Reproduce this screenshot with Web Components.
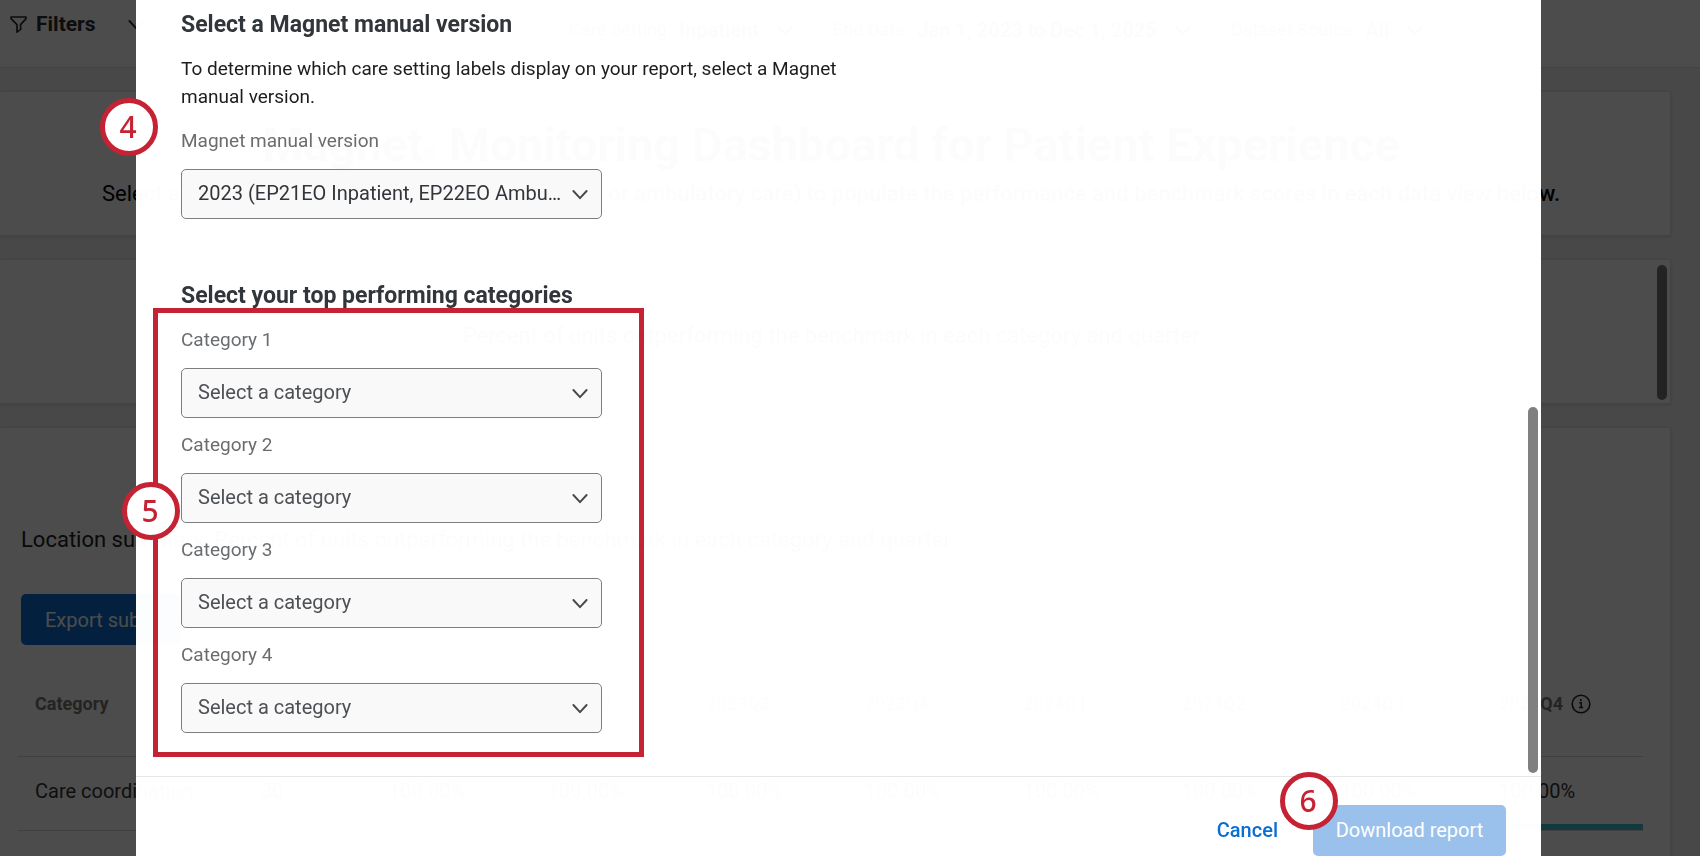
<!DOCTYPE html>
<html lang="en">
<head>
<meta charset="utf-8">
<title>Magnet Monitoring Dashboard</title>
<style>
  html, body { margin: 0; height: 100%; overflow: hidden; }
  body { background: #f1f1f1; font-family: Roboto, "Noto Sans", sans-serif; font-size: 19px; color: #000; }
</style>
</head>
<body>
<magnet-page></magnet-page>
<script>
const define = (name, html, init) => {
  const template = document.createElement('template');
  template.innerHTML = html;
  customElements.define(name, class extends HTMLElement {
    connectedCallback() {
      if (this.shadowRoot) return;
      const root = this.attachShadow({ mode: 'open' });
      root.append(template.content.cloneNode(true));
      if (init) init(this, root);
    }
  });
};

define('chevron-icon', `
  <style>
    :host { display: block; width: 16px; height: 16px; flex: none; }
    svg { display: block; width: 100%; height: 100%; }
  </style>
  <svg viewBox="0 0 16 16" fill="none" stroke="currentColor" stroke-width="1.9" stroke-linecap="round" stroke-linejoin="round"><path d="M1.4 5 8 12.2 14.6 5"/></svg>`);

define('filter-chip', `
  <style>
    :host { display: flex; align-items: center; gap: 8px; font-size: 18px; white-space: nowrap; }
    b { font-size: 20px; }
    chevron-icon { margin-left: 10px; }
  </style>
  <span id="name"></span><b><slot></slot></b><chevron-icon></chevron-icon>`,
  (host, root) => { root.getElementById('name').textContent = host.getAttribute('name'); });

define('filter-bar', `
  <style>
    :host { display: flex; box-sizing: border-box; height: 68px; background: #fff; border-bottom: 1px solid #dedede; }
    .filters { display: flex; align-items: center; height: 48px; width: 560px; padding-left: 9px; color: #2d2d2d; }
    .filters svg { width: 19px; height: 19px; margin-right: 8px; }
    .filters b { font-size: 21px; width: 92px; }
    .chips { display: flex; align-items: center; gap: 40px; height: 59px; }
  </style>
  <div class="filters">
    <svg viewBox="0 0 19 19" fill="none" stroke="currentColor" stroke-width="1.7" stroke-linejoin="round"><path d="M2 2h15v1.6l-5.4 6v4.8L8 17.2V9.6L2 3.6z"/></svg>
    <b>Filters</b><chevron-icon></chevron-icon>
  </div>
  <div class="chips">
    <filter-chip name="Care Setting:">Inpatient</filter-chip>
    <filter-chip name="End Date:">Jan 1, 2023 to Dec 1, 2025</filter-chip>
    <filter-chip name="Dataset Source:">All</filter-chip>
  </div>`);

define('dash-card', `
  <style>
    :host { display: block; box-sizing: border-box; position: relative; background: #fff; border: 1px solid #e2e2e2; border-left: 0; box-shadow: 0 1px 3px rgba(0,0,0,.12); min-height: 145px; }
  </style>
  <slot></slot>`);

define('summary-table', `
  <style>
    :host { display: block; }
    table { width: 100%; border-collapse: collapse; table-layout: fixed; }
    th, td { text-align: left; padding: 0; font-weight: 400; border-bottom: 1px solid #d8d8d8; white-space: nowrap; }
    th:first-child, td:first-child { padding-left: 17px; }
    thead th { box-sizing: border-box; height: 98px; padding-bottom: 6px; font-size: 18px; font-weight: 700; color: #777; vertical-align: middle; }
    tbody th, tbody td { height: 74px; box-sizing: border-box; font-size: 20px; color: #333; vertical-align: top; padding-top: 23px; line-height: 22px; position: relative; }
    .bar { position: absolute; left: 0; right: 0; bottom: 0; height: 6px; background: #3cbecb; }
    .last { display: flex; align-items: center; gap: 8px; }
    svg { width: 20px; height: 20px; color: #222; }
  </style>
  <table>
    <colgroup><col style="width:243px"><col style="width:128px"><col><col><col><col><col><col><col><col style="width:144px"></colgroup>
    <thead><tr></tr></thead><tbody></tbody>
  </table>`,
  (host, root) => {
    const quarters = ['2023Q1', '2023Q2', '2023Q3', '2023Q4', '2024Q1', '2024Q2', '2024Q3'];
    root.querySelector('thead tr').innerHTML = '<th scope="col">Category</th><th scope="col"></th>' +
      quarters.map(q => `<th scope="col">${q}</th>`).join('') +
      `<th scope="col"><span class="last">2024Q4<svg viewBox="0 0 20 20" fill="none" stroke="currentColor"><circle cx="10" cy="10" r="8.8" stroke-width="1.6"/><path d="M8.2 8.8h2v4.4M8 13.6h4.2" stroke-width="1.5"/><circle cx="9.8" cy="6" r="1.1" fill="currentColor" stroke="none"/></svg></span></th>`;
    root.querySelector('tbody').innerHTML = ['Care coordination', 'Careful listening'].map(name =>
      `<tr><th scope="row">${name}</th><td>30</td>${'<td>100.00%</td>'.repeat(7)}<td>100.00%<span class="bar"></span></td></tr>`).join('');
  });

define('dash-board', `
  <style>
    :host { display: block; }
    main { display: flex; flex-direction: column; gap: 23px; padding: 23px 29px 0 0; }
    h1 { margin: 0; padding: 26px 8px 0 0; text-align: center; font-size: 47px; line-height: 54px; white-space: nowrap; }
    sup { font-size: 18px; vertical-align: baseline; font-weight: 400; }
    .intro { display: flex; justify-content: space-between; margin: 0; padding: 0 110px 0 102px; line-height: 24px; font-size: 22px; white-space: nowrap; }
    .intro span + span { font-weight: 500; }
    .sub { margin: 0; padding: 63px 8px 0 0; text-align: center; line-height: 26px; font-size: 22px; }
    .thumb { position: absolute; right: 3px; top: 5px; bottom: 3px; width: 10px; border-radius: 5px; background: #777; }
    .lower { display: flex; flex-direction: column; align-items: flex-start; padding: 98px 27px 0 21px; }
    h2 { margin: 0; font-size: 22px; font-weight: 400; line-height: 28px; color: #222; }
    button { margin: 40px 0 13px; height: 51px; width: 160px; padding: 0 24px; border: 0; border-radius: 5px; background: #0a6ed1; color: #fff; font: 20px Roboto, sans-serif; text-align: left; white-space: nowrap; }
    summary-table { align-self: stretch; margin-left: -3px; }
  </style>
  <filter-bar></filter-bar>
  <main>
    <dash-card>
      <h1>Magnet<sup>®</sup> Monitoring Dashboard for Patient Experience</h1>
      <p class="intro"><span>Select a</span><span>or ambulatory care) to populate the performance and benchmark scores in each data view below.</span></p>
    </dash-card>
    <dash-card>
      <p class="sub">Percent of units outperforming the benchmark in each category and quarter</p>
      <div class="thumb"></div>
    </dash-card>
    <dash-card>
      <div class="lower">
        <h2>Location summary: Percent of units outperforming the benchmark in each category and quarter</h2>
        <button type="button">Export sub</button>
        <summary-table></summary-table>
      </div>
    </dash-card>
  </main>`);

define('select-field', `
  <style>
    :host { display: flex; flex-direction: column; gap: 14px; width: 421px; }
    label { font-size: 19px; line-height: 28px; color: #6a6d70; }
    .box { display: grid; align-items: center; height: 50px; }
    .box > * { grid-area: 1 / 1; }
    select { appearance: none; width: 100%; height: 100%; box-sizing: border-box; margin: 0; padding: 0 38px 2px 16px; border: 1px solid #7c7e80; border-radius: 5px; background: #f9f9f9; color: #4d5054; font: 20px Roboto, sans-serif; text-overflow: ellipsis; }
    select.filled { color: #32363a; }
    chevron-icon { justify-self: end; margin-right: 14px; color: #45484c; pointer-events: none; }
  </style>
  <label for="field"></label>
  <div class="box"><select id="field"><option></option></select><chevron-icon></chevron-icon></div>`,
  (host, root) => {
    root.querySelector('label').textContent = host.getAttribute('label');
    root.querySelector('option').textContent = host.getAttribute('value') || 'Select a category';
    root.querySelector('select').classList.toggle('filled', host.hasAttribute('value'));
  });

define('step-badge', `
  <style>
    :host { position: absolute; box-sizing: border-box; width: 58px; height: 58px; border: 5px solid #c52233; border-radius: 50%; background: #fff; color: #c52233; display: flex; align-items: center; justify-content: center; padding: 0 2px 2px 0; font: 500 30px "Noto Sans", sans-serif; z-index: 2; }
  </style>
  <slot></slot>`);

define('report-dialog', `
  <style>
    :host { position: fixed; inset: 0 159px 0 136px; display: flex; flex-direction: column; background: rgba(255,255,255,.988); box-shadow: 0 0 0 100vmax rgba(0,0,0,.7); }
    .body { flex: 1; position: relative; min-height: 0; padding: 11px 45px 0; }
    h2 { margin: 0; font-size: 23px; line-height: 28px; font-weight: 700; color: #32363a; }
    p { margin: 16px 0; max-width: 700px; line-height: 28px; color: #1d1d1f; }
    .version, .categories { position: relative; }
    .version { margin-bottom: 63px; }
    .version step-badge { left: -81px; top: -29px; }
    .categories { display: flex; flex-direction: column; gap: 13px; margin-top: 16px; }
    .mark { position: absolute; box-sizing: border-box; left: -28px; top: -18px; width: 491px; bottom: -24px; border: 5px solid #c52233; pointer-events: none; }
    .categories step-badge { left: -59px; top: 156px; }
    .thumb { position: absolute; right: 3px; bottom: 3px; width: 10px; height: 366px; border-radius: 5px; background: #808080; }
    footer { box-sizing: border-box; display: flex; justify-content: flex-end; align-items: flex-start; gap: 35px; height: 80px; padding: 28px 35px 0 0; border-top: 1px solid #e6e7e8; }
    button { height: 51px; border: 0; border-radius: 5px; padding: 0 0 2px; font: 20px Roboto, sans-serif; }
    .cancel { background: none; color: #0a6ed1; font-weight: 500; }
    .primary-wrap { position: relative; }
    .primary { width: 193px; background: #9ac1eb; color: #fff; }
    .primary-wrap step-badge { left: -33px; top: -33px; }
  </style>
  <div class="body">
    <h2>Select a Magnet manual version</h2>
    <p>To determine which care setting labels display on your report, select a Magnet manual version.</p>
    <div class="version">
      <select-field label="Magnet manual version" value="2023 (EP21EO Inpatient, EP22EO Ambu..."></select-field>
      <step-badge>4</step-badge>
    </div>
    <h2>Select your top performing categories</h2>
    <div class="categories">
      <select-field label="Category 1"></select-field>
      <select-field label="Category 2"></select-field>
      <select-field label="Category 3"></select-field>
      <select-field label="Category 4"></select-field>
      <div class="mark"></div>
      <step-badge>5</step-badge>
    </div>
    <div class="thumb"></div>
  </div>
  <footer>
    <button class="cancel" type="button">Cancel</button>
    <div class="primary-wrap"><button class="primary" type="button">Download report</button><step-badge>6</step-badge></div>
  </footer>`);

define('magnet-page', `
  <style>:host { display: block; height: 100%; overflow: hidden; }</style>
  <dash-board></dash-board>
  <report-dialog role="dialog" aria-modal="true"></report-dialog>`);
</script>
</body>
</html>
